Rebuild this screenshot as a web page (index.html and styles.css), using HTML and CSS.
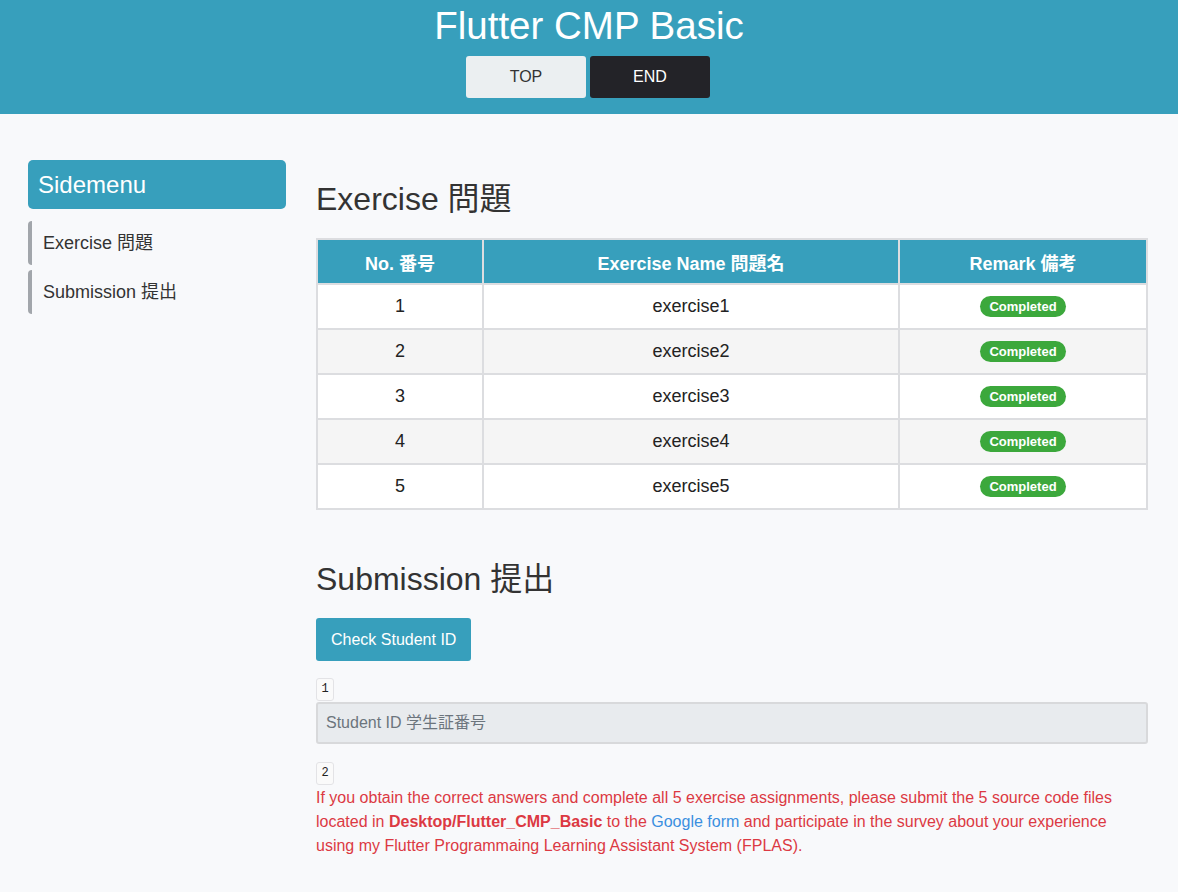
FILE: index.html
```html
<!DOCTYPE html>
<html lang="en">
<head>
<meta charset="utf-8">
<title>Flutter CMP Basic</title>
<link rel="stylesheet" href="styles.css">
</head>
<body>
<header class="topbar">
  <h1 class="site-title">Flutter CMP Basic</h1>
  <nav class="top-nav">
    <a class="nav-btn nav-top" href="#">TOP</a>
    <a class="nav-btn nav-end" href="#">END</a>
  </nav>
</header>
<div class="layout">
  <aside class="sidebar">
    <div class="side-title">Sidemenu</div>
    <a class="side-item" href="#exercise">Exercise 問題</a>
    <a class="side-item" href="#submission">Submission 提出</a>
  </aside>
  <main class="content">
    <h2 class="section-title" id="exercise">Exercise 問題</h2>
    <table class="ex-table">
      <thead>
        <tr><th class="c-no">No. 番号</th><th class="c-name">Exercise Name 問題名</th><th class="c-rem">Remark 備考</th></tr>
      </thead>
      <tbody>
        <tr><td>1</td><td>exercise1</td><td><span class="badge">Completed</span></td></tr>
        <tr><td>2</td><td>exercise2</td><td><span class="badge">Completed</span></td></tr>
        <tr><td>3</td><td>exercise3</td><td><span class="badge">Completed</span></td></tr>
        <tr><td>4</td><td>exercise4</td><td><span class="badge">Completed</span></td></tr>
        <tr><td>5</td><td>exercise5</td><td><span class="badge">Completed</span></td></tr>
      </tbody>
    </table>
    <h2 class="section-title sub-title" id="submission">Submission 提出</h2>
    <button class="check-btn" type="button">Check Student ID</button>
    <div class="step"><code class="step-num">1</code></div>
    <input class="id-input" type="text" placeholder="Student ID 学生証番号">
    <div class="step step2"><code class="step-num">2</code></div>
    <p class="notice">If you obtain the correct answers and complete all 5 exercise assignments, please submit the 5 source code files located in <b>Desktop/Flutter_CMP_Basic</b> to the <a href="#" class="form-link">Google form</a> and participate in the survey about your experience using my Flutter Programmaing Learning Assistant System (FPLAS).</p>
  </main>
</div>
</body>
</html>
```
FILE: styles.css
```css
* { box-sizing: border-box; }
html, body { margin: 0; padding: 0; }
body {
  background: #f8f9fb;
  font-family: "Liberation Sans", Arial, "Noto Sans CJK JP", sans-serif;
  color: #333;
  width: 1178px;
  min-height: 892px;
}
.topbar {
  background: #379fbc;
  height: 114px;
  display: flex;
  flex-direction: column;
  align-items: center;
}
.site-title {
  margin: 0;
  padding-top: 3px;
  font-size: 38.5px;
  font-weight: 400;
  line-height: 45px;
  color: #fff;
}
.top-nav {
  display: flex;
  gap: 4px;
  margin-top: 8px;
  padding-right: 2px;
}
.nav-btn {
  width: 120px;
  height: 42px;
  display: flex;
  align-items: center;
  justify-content: center;
  border-radius: 3px;
  font-size: 16px;
  text-decoration: none;
}
.nav-top { background: #ebeff1; color: #333; }
.nav-end { background: #232328; color: #fff; }

.layout {
  display: flex;
  padding: 46px 0 0 28px;
}
.sidebar {
  width: 258px;
  flex: none;
  display: flex;
  flex-direction: column;
}
.side-title {
  height: 49px;
  background: #379fbc;
  color: #fff;
  border-radius: 5px;
  font-size: 24px;
  line-height: 49px;
  padding-left: 10px;
}
.side-item {
  display: block;
  height: 44px;
  line-height: 44px;
  border-left: 4px solid #a2a6ab;
  border-radius: 4px 0 0 4px;
  padding-left: 11px;
  font-size: 18px;
  color: #333;
  text-decoration: none;
}
.side-item:first-of-type { margin-top: 12px; }
.side-item + .side-item { margin-top: 5px; }

.content {
  margin-left: 30px;
  width: 832px;
  padding-top: 20px;
}
.section-title {
  margin: 0;
  font-size: 32px;
  font-weight: 400;
  line-height: 38px;
  color: #333;
}
.ex-table {
  margin-top: 20px;
  width: 832px;
  border-collapse: collapse;
  border: 2px solid #dcdde0;
  font-size: 18px;
}
.ex-table th, .ex-table td {
  border: 2px solid #dcdde0;
  text-align: center;
  height: 45px;
  padding: 0;
}
.ex-table th {
  background: #379fbc;
  color: #fff;
  font-weight: 700;
}
.c-no { width: 166px; }
.c-name { width: 416px; }
.ex-table td { color: #222; background: #fff; }
.ex-table tbody tr:nth-child(even) td { background: #f5f5f5; }
.badge {
  display: inline-block;
  background: #3ca83c;
  color: #fff;
  font-size: 13px;
  font-weight: 700;
  line-height: 21px;
  padding: 0 9px;
  border-radius: 11px;
  vertical-align: middle;
}
.sub-title { margin-top: 50px; }
.check-btn {
  margin-top: 20px;
  display: block;
  height: 43px;
  padding: 0 15px;
  background: #379fbc;
  color: #fff;
  border: none;
  border-radius: 3px;
  font-family: inherit;
  font-size: 16px;
}
.step { margin-top: 17px; height: 24px; }
.step-num {
  display: inline-block;
  height: 23px;
  min-width: 18px;
  padding: 0 4px;
  border: 1px solid #e3e3e6;
  border-radius: 3px;
  background: #fafafa;
  font-family: "Liberation Mono", monospace;
  font-size: 12px;
  line-height: 21px;
  color: #222;
  text-align: center;
}
.id-input {
  display: block;
  width: 832px;
  height: 42px;
  background: #e8ebee;
  border: 2px solid #d8d9db;
  border-radius: 3px;
  padding: 0 8px;
  font-family: inherit;
  font-size: 16px;
  color: #333;
}
.id-input::placeholder { color: #6c757d; }
.step2 { margin-top: 18px; }
.notice {
  margin: 0;
  color: #dc3943;
  font-size: 16px;
  line-height: 24px;
}
.notice b { font-weight: 700; }
.form-link { color: #3b8fe0; text-decoration: none; }
```
